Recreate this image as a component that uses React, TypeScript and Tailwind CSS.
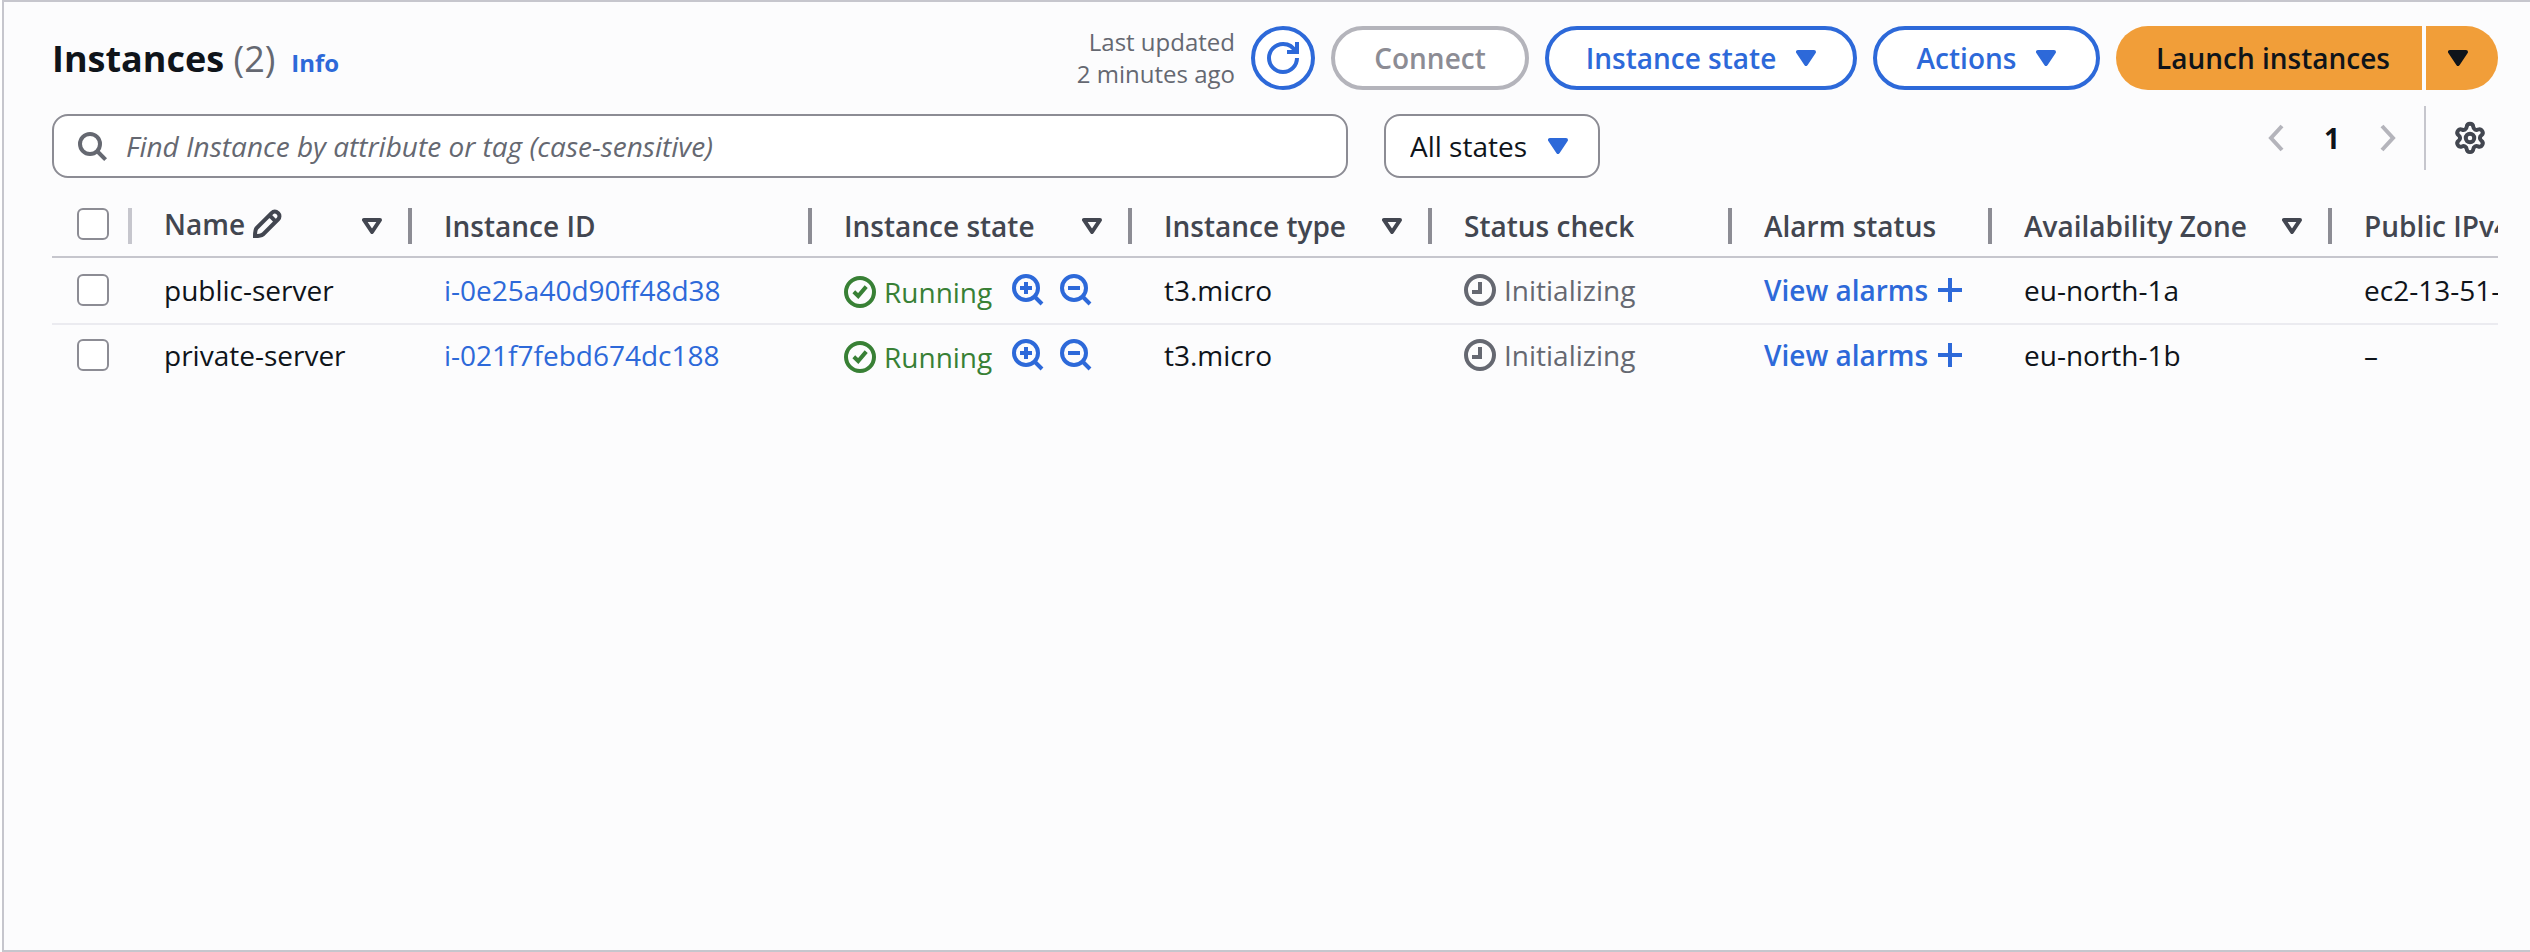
import React from "react";
import { Settings } from "lucide-react";

type Instance = {
  name: string;
  id: string;
  state: string;
  type: string;
  check: string;
  zone: string;
  dns: string;
};

const instances: Instance[] = [
  {
    name: "public-server",
    id: "i-0e25a40d90ff48d38",
    state: "Running",
    type: "t3.micro",
    check: "Initializing",
    zone: "eu-north-1a",
    dns: "ec2-13-51-166-24.eu-north-1",
  },
  {
    name: "private-server",
    id: "i-021f7febd674dc188",
    state: "Running",
    type: "t3.micro",
    check: "Initializing",
    zone: "eu-north-1b",
    dns: "–",
  },
];

function Icon({ children, className = "size-8" }: { children: React.ReactNode; className?: string }) {
  return (
    <svg
      viewBox="0 0 16 16"
      fill="none"
      stroke="currentColor"
      strokeWidth={2}
      aria-hidden="true"
      className={`shrink-0 ${className}`}
    >
      {children}
    </svg>
  );
}

function Caret({ hollow = false, className = "" }: { hollow?: boolean; className?: string }) {
  return (
    <svg viewBox="0 0 20 16" aria-hidden="true" className={`h-4 w-5 shrink-0 ${className}`}>
      <path
        d="M2 2h16l-8 12z"
        fill={hollow ? "none" : "currentColor"}
        stroke="currentColor"
        strokeWidth={4}
        strokeLinejoin="round"
      />
    </svg>
  );
}

function Chevron({ flip = false }: { flip?: boolean }) {
  return (
    <svg
      viewBox="0 0 16 28"
      fill="none"
      stroke="currentColor"
      strokeWidth={4}
      aria-hidden="true"
      className="h-7 w-4"
    >
      <path d={flip ? "M2 2 13 14 2 26" : "M14 2 3 14l11 12"} />
    </svg>
  );
}

function Zoom({ plus = false }: { plus?: boolean }) {
  return (
    <Icon>
      <circle cx="7" cy="7" r="6" />
      <path d="m11 11 4 4M4 7h6" />
      {plus && <path d="M7 4v6" />}
    </Icon>
  );
}

function Checkbox({ label }: { label: string }) {
  return (
    <input
      type="checkbox"
      aria-label={label}
      className="block size-8 appearance-none rounded-md border-2 border-[#8c8c94] bg-white"
    />
  );
}

function OutlineButton({ children, className }: { children: React.ReactNode; className: string }) {
  return (
    <button
      type="button"
      className={`flex h-16 items-center justify-center gap-5 rounded-full border-4 border-[#2d69d9] bg-white font-semibold text-[#2d69d9] ${className}`}
    >
      {children}
    </button>
  );
}

function HeaderCell({ children, sortable = false }: { children: React.ReactNode; sortable?: boolean }) {
  return (
    <th scope="col" className="border-b-2 border-[#c6c6cd] px-0 pt-4 pb-3 text-left font-semibold">
      <div className="flex h-9 items-start justify-between border-r-4 border-[#8c8c94] pr-[26px] pl-8">
        <span className="leading-9">{children}</span>
        {sortable && <Caret hollow className="mt-2.5" />}
      </div>
    </th>
  );
}

function Cell({ children }: { children: React.ReactNode }) {
  return (
    <td className="overflow-hidden border-b-2 border-[#ebebf0] px-0 pt-3.5 pb-[17px] pl-8 align-top group-first:pt-4 group-last:border-transparent">
      {children}
    </td>
  );
}

export default function App() {
  return (
    <div className="min-h-screen bg-white pl-0.5 font-['Open_Sans','Noto_Sans',sans-serif] text-[28px] leading-8 whitespace-nowrap text-[#0f141a]">
      <main className="min-h-screen border-y-2 border-l-2 border-[#c6c6cd] bg-[#fcfcfd] pt-6 pr-8 pl-12">
        <header className="flex items-start justify-between">
          <div className="flex h-16 items-baseline">
            <h1 className="text-4xl leading-[66px] font-bold">
              Instances <span className="font-normal text-[#656871]">(2)</span>
            </h1>
            <a href="#info" className="ml-4 text-2xl font-bold text-[#2d69d9]">
              Info
            </a>
          </div>
          <div className="flex items-center gap-4">
            <p className="text-right text-2xl leading-8 text-[#656871]">
              Last updated
              <br />2 minutes ago
            </p>
            <button
              type="button"
              aria-label="Refresh"
              className="flex size-16 items-center justify-center rounded-full border-4 border-[#2d69d9] bg-white text-[#2d69d9]"
            >
              <Icon>
                <path d="M10 5h5V0" />
                <path d="M15 8a7 7 0 0 1-7 7 7 7 0 0 1-7-7 7 7 0 0 1 7-7 6.9 6.9 0 0 1 6.3 4" />
              </Icon>
            </button>
            <button
              type="button"
              disabled
              className="h-16 w-[198px] rounded-full border-4 border-[#b4b4bb] bg-white font-semibold text-[#8c8c94]"
            >
              Connect
            </button>
            <OutlineButton className="w-[312px]">
              Instance state <Caret />
            </OutlineButton>
            <OutlineButton className="w-[227px]">
              Actions <Caret />
            </OutlineButton>
            <div className="flex gap-1">
              <button type="button" className="h-16 w-[306px] rounded-l-full bg-[#f19e39] pl-2 font-semibold">
                Launch instances
              </button>
              <button
                type="button"
                aria-label="More launch options"
                className="flex h-16 w-[72px] items-center justify-center rounded-r-full bg-[#f19e39] pr-2"
              >
                <Caret />
              </button>
            </div>
          </div>
        </header>

        <div className="mt-6 flex items-start justify-between">
          <div className="flex flex-1 gap-9">
            <div className="relative max-w-[1296px] flex-1">
              <Icon className="absolute top-4 left-6 size-8 text-[#656871]">
                <circle cx="7" cy="7" r="5" />
                <path d="m10.5 10.5 4.3 4.3" />
              </Icon>
              <input
                type="text"
                aria-label="Find Instance"
                placeholder="Find Instance by attribute or tag (case-sensitive)"
                className="block h-16 w-full rounded-2xl border-2 border-[#8c8c94] bg-white pl-[72px] leading-10 placeholder:text-[#656871] placeholder:italic"
              />
            </div>
            <div className="relative">
              <select
                aria-label="Instance states"
                className="block h-16 w-[216px] appearance-none rounded-2xl border-2 border-[#8c8c94] bg-white pl-6 leading-10"
              >
                <option>All states</option>
              </select>
              <Caret className="pointer-events-none absolute top-6 right-8 text-[#2d69d9]" />
            </div>
          </div>
          <div className="-mt-2 flex h-16 items-center">
            <nav aria-label="Pagination" className="flex items-center gap-10 pr-7 text-[#b4b4bb]">
              <button type="button" aria-label="Previous page" disabled>
                <Chevron />
              </button>
              <button type="button" aria-label="Page 1" className="font-bold text-[#0f141a]">
                1
              </button>
              <button type="button" aria-label="Next page" disabled>
                <Chevron flip />
              </button>
            </nav>
            <button
              type="button"
              aria-label="Preferences"
              className="flex h-16 items-center border-l-2 border-[#c6c6cd] pr-[11px] pl-[27px] text-[#424650]"
            >
              <Settings size={34} strokeWidth={2.8} />
            </button>
          </div>
        </div>

        <div className="mt-3.5 overflow-hidden">
          <table className="w-full table-fixed border-separate border-spacing-0">
            <colgroup>
              <col className="w-20" />
              <col className="w-[280px]" />
              <col className="w-[400px]" />
              <col className="w-[320px]" />
              <col className="w-[300px]" />
              <col className="w-[300px]" />
              <col className="w-[260px]" />
              <col className="w-[340px]" />
              <col />
            </colgroup>
            <thead className="text-[#424650]">
              <tr>
                <th className="border-b-2 border-[#c6c6cd] px-0 pt-4 pb-3">
                  <div className="h-9 border-r-4 border-[#c6c6cd] pl-[25px]">
                    <Checkbox label="Select all instances" />
                  </div>
                </th>
                <HeaderCell sortable>
                  <span className="flex h-8 items-center gap-1.5">
                    Name
                    <Icon>
                      <path d="M2 14c0-2 .2-3.2.8-4L10.4 2.4a2.1 2.1 0 0 1 3 0l.2.2a2.1 2.1 0 0 1 0 3L6 13.2c-.8.6-2 .8-4 .8ZM9.2 3.6l3.2 3.2" />
                    </Icon>
                  </span>
                </HeaderCell>
                <HeaderCell>Instance ID</HeaderCell>
                <HeaderCell sortable>Instance state</HeaderCell>
                <HeaderCell sortable>Instance type</HeaderCell>
                <HeaderCell>Status check</HeaderCell>
                <HeaderCell>Alarm status</HeaderCell>
                <HeaderCell sortable>Availability Zone</HeaderCell>
                <th
                  scope="col"
                  className="overflow-hidden border-b-2 border-[#c6c6cd] px-0 pt-4 pb-3 pl-8 text-left align-top leading-9 font-semibold"
                >
                  Public IPv4 DNS
                </th>
              </tr>
            </thead>
            <tbody>
              {instances.map((item) => (
                <tr key={item.id} className="group">
                  <td className="border-b-2 border-[#ebebf0] px-0 pt-3.5 pb-[17px] pl-[25px] align-top group-first:pt-4 group-last:border-transparent">
                    <Checkbox label={`Select ${item.name}`} />
                  </td>
                  <Cell>{item.name}</Cell>
                  <Cell>
                    <a href={`#${item.id}`} className="text-[#2d69d9]">
                      {item.id}
                    </a>
                  </Cell>
                  <Cell>
                    <div className="flex h-8 items-start justify-between pr-10">
                      <span className="mt-0.5 flex items-center gap-2 text-[#388035]">
                        <Icon>
                          <circle cx="8" cy="8" r="7" />
                          <path d="M4.9 7.9 7.1 10l4-4.7" />
                        </Icon>
                        {item.state}
                      </span>
                      <span className="flex gap-4 text-[#2d69d9]">
                        <button type="button" aria-label="Filter in">
                          <Zoom plus />
                        </button>
                        <button type="button" aria-label="Filter out">
                          <Zoom />
                        </button>
                      </span>
                    </div>
                  </Cell>
                  <Cell>{item.type}</Cell>
                  <Cell>
                    <span className="flex items-center gap-2 text-[#656871]">
                      <Icon>
                        <circle cx="8" cy="8" r="7" />
                        <path d="M8 4v5H4" />
                      </Icon>
                      {item.check}
                    </span>
                  </Cell>
                  <Cell>
                    <button type="button" className="flex items-center gap-1.5 font-semibold text-[#2d69d9]">
                      View alarms
                      <Icon>
                        <path d="M8 2v12M2 8h12" />
                      </Icon>
                    </button>
                  </Cell>
                  <Cell>{item.zone}</Cell>
                  <Cell>{item.dns}</Cell>
                </tr>
              ))}
            </tbody>
          </table>
        </div>
      </main>
    </div>
  );
}
